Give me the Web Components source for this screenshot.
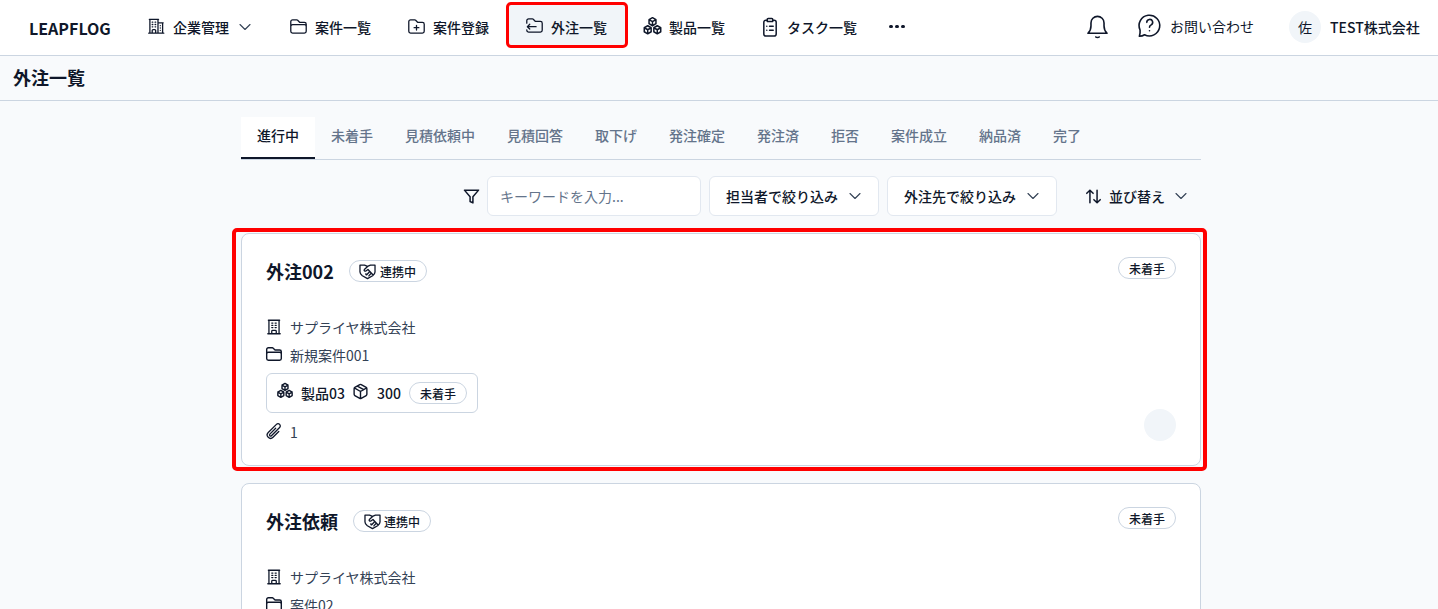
<!DOCTYPE html>
<html lang="ja"><head><meta charset="utf-8"><title>外注一覧</title>
<style>
html,body{margin:0;padding:0;height:609px;overflow:hidden;background:#f8fafc;color:#0f172a;font-family:"Noto Sans CJK JP","Noto Sans",sans-serif;font-size:14px}
</style></head><body>
<app-header></app-header>
<page-title>外注一覧</page-title>
<main-area>
  <status-tabs></status-tabs>
  <filter-bar></filter-bar>
  <order-card highlight title-text="外注002" project="新規案件001" product="製品03" qty="300" files="1"></order-card>
  <order-card title-text="外注依頼" project="案件02" product="製品03" qty="300" files="1"></order-card>
</main-area>
<script>
const P={
 buildingWide:'M2.25 21h19.5m-18-18v18m10.5-18v18m6-13.5V21M6.75 6.75h.75m-.75 3h.75m-.75 3h.75m3-6h.75m-.75 3h.75m-.75 3h.75M6.75 21v-3.375c0-.621.504-1.125 1.125-1.125h2.25c.621 0 1.125.504 1.125 1.125V21M3 3h12m-.75 4.5H21m-3.75 3.75h.008v.008h-.008v-.008Zm0 3h.008v.008h-.008v-.008Zm0 3h.008v.008h-.008v-.008Z',
 building:'M3.75 21h16.5M4.5 3h15M5.25 3v18m13.5-18v18M9 6.75h1.5m-1.5 3h1.5m-1.5 3h1.5m3-6H15m-1.5 3H15m-1.5 3H15M9 21v-3.375c0-.621.504-1.125 1.125-1.125h3.75c.621 0 1.125.504 1.125 1.125V21',
 folder:'M2.25 12.75V12A2.25 2.25 0 0 1 4.5 9.75h15A2.25 2.25 0 0 1 21.75 12v.75m-8.69-6.44-2.12-2.12a1.5 1.5 0 0 0-1.061-.44H4.5A2.25 2.25 0 0 0 2.25 6v12a2.25 2.25 0 0 0 2.25 2.25h15A2.25 2.25 0 0 0 21.75 18V9a2.25 2.25 0 0 0-2.25-2.25h-5.379a1.5 1.5 0 0 1-1.06-.44Z',
 folderPlus:'M12 10.5v6m3-3H9m4.06-7.19-2.12-2.12a1.5 1.5 0 0 0-1.061-.44H4.5A2.25 2.25 0 0 0 2.25 6v12a2.25 2.25 0 0 0 2.25 2.25h15A2.25 2.25 0 0 0 21.75 18V9a2.25 2.25 0 0 0-2.25-2.25h-5.379a1.5 1.5 0 0 1-1.06-.44Z',
 folderIn:'M2.25 9V6A2.25 2.25 0 0 1 4.5 3.75h4.88a1.5 1.5 0 0 1 1.06.44l2.12 2.12a1.5 1.5 0 0 0 1.06.44h5.88A2.25 2.25 0 0 1 21.75 9v9a2.25 2.25 0 0 1-2.25 2.25h-15A2.25 2.25 0 0 1 2.25 18v-.5M14 13.5H3M6 10.5l-3 3 3 3',
 boxes:'M12 2.8l3.6 2.1v4.2L12 11.2 8.4 9.1V4.9zM8.4 4.9 12 7l3.6-2.1M12 7v4.2M7 11.2l3.6 2.1v4.2L7 19.6l-3.6-2.1v-4.2zM3.4 13.3 7 15.4l3.6-2.1M7 15.4v4.2M17 11.2l3.6 2.1v4.2L17 19.6l-3.6-2.1v-4.2zM13.4 13.3l3.6 2.1 3.6-2.1M17 15.4v4.2',
 clipboard:'M9 4.5H7.5A2.25 2.25 0 0 0 5.25 6.75v12.75a2.25 2.25 0 0 0 2.25 2.25h9a2.25 2.25 0 0 0 2.25-2.25V6.75A2.25 2.25 0 0 0 16.5 4.5H15M9 3.75C9 3.2 9.4 2.75 10 2.75h4c.6 0 1 .45 1 1V6H9zM11.5 11.25h4M11.5 15.5h4M8.5 11.25h.01M8.5 15.5h.01',
 chev:'m19.5 8.25-7.5 7.5-7.5-7.5',
 bell:'M3.5 18h17c-1.7-1.6-2.7-3.4-2.7-6.5V8.8a5.8 5.8 0 0 0-11.6 0v2.7c0 3.1-1 4.9-2.7 6.5ZM10.5 21.3c.7.7 2.3.7 3 0',
 help:'M3 21.5c1.8 0 3.3-.4 4.6-1.3A9.2 9.2 0 1 0 3.6 16c.2 1.9 0 3.8-.6 5.5ZM9.6 9.2a2.6 2.6 0 1 1 3.9 2.2c-.9.5-1.5 1.1-1.5 2.1M12 16.6h.01',
 funnel:'M22 3H2l8 9.46V19l4 2v-8.54L22 3Z',
 sort:'M7.5 20V4M3.5 8l4-4 4 4M16.5 4v16M12.5 16l4 4 4-4',
 shake:'M2.5 4h5.8L12 5.4 15.7 4h5.8v8.5c0 2.2-1.3 3.4-3 4.8L12 21l-6.5-3.7c-1.7-1.4-3-2.6-3-4.8ZM12.5 5.4 8 9.6c-.9 1 .5 2.6 2 1.7l2.6-1.9 5.9 6.4M14.3 12.6l-3 3.2c-.7.8-1.7 0-1.3-.9M16.4 14.6l-2.7 3',
 cube:'M21 8a2 2 0 0 0-1-1.73l-7-4a2 2 0 0 0-2 0l-7 4A2 2 0 0 0 3 8v8a2 2 0 0 0 1 1.73l7 4a2 2 0 0 0 2 0l7-4A2 2 0 0 0 21 16ZM12 22V12M3.3 7 12 12l8.7-5M7.5 4.27l9 5.15',
 clip:'m18.375 12.739-7.693 7.693a4.5 4.5 0 0 1-6.364-6.364l10.94-10.94A3 3 0 1 1 19.5 7.372L8.552 18.32m.009-.01-.01.01m5.699-9.941-7.81 7.81a1.5 1.5 0 0 0 2.112 2.13'
};
class XIcon extends HTMLElement{
 connectedCallback(){
  const s=+(this.getAttribute('size')||16),d=+(this.getAttribute('draw')||s),w=+(this.getAttribute('w')||1.3),u=+(this.getAttribute('up')||0);
  const m=(s-d)/2;
  this.attachShadow({mode:'open'}).innerHTML=`<style>:host{display:inline-flex;flex:none;width:${s}px;height:${s}px}svg{display:block;flex:none;margin:${m-u}px 0 0 ${m}px;overflow:visible}</style><svg width="${d}" height="${d}" viewBox="0 0 24 24" fill="none" stroke="currentColor" stroke-width="${w*24/d}" stroke-linecap="round" stroke-linejoin="round"><path d="${P[this.getAttribute('n')]}"/></svg>`;
 }
}
customElements.define('x-icon',XIcon);

class NavItem extends HTMLElement{
 constructor(){super();this.attachShadow({mode:'open'}).innerHTML=`<style>
 :host{display:flex;align-items:center;gap:9px;height:40px;padding:0 16px 2px;border-radius:6px;box-sizing:border-box;position:relative;isolation:isolate;color:#0f172a;font-weight:500;white-space:nowrap}
 .mark{display:none;position:absolute;z-index:-1;left:-4px;right:-5px;top:-6px;bottom:0;border:3.5px solid #f00;border-radius:5px;box-sizing:border-box;background:#f1f5f9}
 :host([active]) .mark{display:block}
 </style><slot></slot><div class="mark"></div>`}
}
customElements.define('nav-item',NavItem);

class AppHeader extends HTMLElement{
 constructor(){super();this.attachShadow({mode:'open'}).innerHTML=`<style>
 :host{display:flex;align-items:center;height:56px;box-sizing:border-box;border-bottom:1px solid #cbd5e1;background:#fff;padding:0 19px 0 29px;font-size:14px}
 .logo{font-weight:600;font-size:16px;width:103px;flex:none;white-space:nowrap}
 nav{display:flex;align-items:center;gap:5px}
 .chev{margin-left:-1px;color:#334155}
 .more{width:16px;margin-left:11px;display:flex;gap:2.5px;justify-content:center;position:relative;top:-1px}
 .more i{width:3.5px;height:3.5px;border-radius:50%;background:#0f172a;display:block;flex:none}
 .right{margin-left:auto;display:flex;align-items:center}
 .q{display:flex;align-items:center;margin-left:28px;gap:9px;white-space:nowrap}
 .q span{position:relative;top:-2px}
 .av{width:32px;height:32px;border-radius:50%;background:#f1f5f9;display:flex;align-items:center;justify-content:center;margin-left:35px;margin-right:9px;position:relative;top:-1px}
 .co{white-space:nowrap;font-weight:500;width:89px;position:relative;top:-1px}
 </style>
 <div class="logo">LEAPFLOG</div>
 <nav>
 <nav-item><x-icon n="buildingWide" draw="18.5"></x-icon>企業管理<x-icon class="chev" n="chev" w="1.1"></x-icon></nav-item>
 <nav-item><x-icon n="folder" draw="19"></x-icon>案件一覧</nav-item>
 <nav-item><x-icon n="folderPlus" draw="19"></x-icon>案件登録</nav-item>
 <nav-item active><x-icon n="folderIn" draw="19" up="1"></x-icon>外注一覧</nav-item>
 <nav-item><x-icon n="boxes" draw="23" w="1.5"></x-icon>製品一覧</nav-item>
 <nav-item><x-icon n="clipboard" draw="22" w="1.5"></x-icon>タスク一覧</nav-item>
 <div class="more"><i></i><i></i><i></i></div>
 </nav>
 <div class="right">
 <x-icon n="bell" size="24" draw="27" w="1.6" up="1"></x-icon>
 <div class="q"><x-icon n="help" size="24" draw="27" w="1.6" up="2"></x-icon><span>お問い合わせ</span></div>
 <div class="av">佐</div><div class="co">TEST株式会社</div>
 </div>`}
}
customElements.define('app-header',AppHeader);

class PageTitle extends HTMLElement{
 constructor(){super();this.attachShadow({mode:'open'}).innerHTML=`<style>:host{display:flex;align-items:center;height:45px;box-sizing:border-box;border-bottom:1px solid #cbd5e1;padding:0 0 2px 13px;font-size:18px;font-weight:600;background:#f8fafc}</style><slot></slot>`}
}
customElements.define('page-title',PageTitle);

class MainArea extends HTMLElement{
 constructor(){super();this.attachShadow({mode:'open'}).innerHTML=`<style>:host{display:block;width:960px;margin:0 auto 0 241px;padding-top:16px}</style><slot></slot>`}
}
customElements.define('main-area',MainArea);

class StatusTabs extends HTMLElement{
 constructor(){super();
 const t=['進行中','未着手','見積依頼中','見積回答','取下げ','発注確定','発注済','拒否','案件成立','納品済','完了'];
 this.attachShadow({mode:'open'}).innerHTML=`<style>
 :host{display:flex;height:43px;box-sizing:border-box;border-bottom:1px solid #cbd5e1}
 div{height:42px;box-sizing:border-box;padding:0 16px 6px;display:flex;align-items:center;color:#64748b;font-weight:500;font-size:14px;white-space:nowrap}
 .on{background:#fff;color:#0f172a;border-bottom:2px solid #0f172a;padding-bottom:4px}
 </style>`+t.map((x,i)=>`<div class="${i?'':'on'}">${x}</div>`).join('')}
}
customElements.define('status-tabs',StatusTabs);

class FilterBar extends HTMLElement{
 constructor(){super();this.attachShadow({mode:'open'}).innerHTML=`<style>
 :host{display:flex;align-items:center;justify-content:flex-end;margin-top:16px;height:40px;gap:8px;font-weight:500}
 .in{width:214px;height:40px;box-sizing:border-box;border:1px solid #e2e8f0;border-radius:6px;background:#fff;padding-left:12px;display:flex;align-items:center;color:#64748b;font-weight:400}
 .b{height:40px;box-sizing:border-box;border:1px solid #e2e8f0;border-radius:6px;background:#fff;padding:0 16px;display:flex;align-items:center;gap:9px;white-space:nowrap;width:170px}
 .s{height:40px;display:flex;align-items:center;gap:8px;padding:0 12px 0 20px;white-space:nowrap}
 .c{color:#334155}
 </style>
 <x-icon n="funnel" draw="17" w="1.5"></x-icon>
 <div class="in">キーワードを入力...</div>
 <div class="b">担当者で絞り込み<x-icon class="c" n="chev" w="1.1"></x-icon></div>
 <div class="b">外注先で絞り込み<x-icon class="c" n="chev" w="1.1"></x-icon></div>
 <div class="s"><x-icon n="sort" draw="19" w="1.5"></x-icon>並び替え<x-icon class="c" n="chev" w="1.1"></x-icon></div>`}
}
customElements.define('filter-bar',FilterBar);

class StatusChip extends HTMLElement{
 constructor(){super();this.attachShadow({mode:'open'}).innerHTML=`<style>
 :host{display:inline-flex;align-items:center;gap:4px;height:22px;box-sizing:border-box;padding:0 10px;border:1px solid #cbd5e1;border-radius:999px;background:#fff;font-size:12px;font-weight:500;color:#0f172a;white-space:nowrap;flex:none}
 </style><slot></slot>`}
}
customElements.define('status-chip',StatusChip);

class OrderCard extends HTMLElement{
 connectedCallback(){
 const a=n=>this.getAttribute(n);
 this.attachShadow({mode:'open'}).innerHTML=`<style>
 :host{display:block;position:relative;height:233px;box-sizing:border-box;margin-top:17px;border:1px solid #cbd5e1;border-radius:8px;background:#fff;padding:22px 24px 24px;color:#334155}
 .mark{display:none;position:absolute;left:-10px;right:-7px;top:-6px;bottom:-6px;border:4px solid #f00;border-radius:5px;box-sizing:border-box}
 :host([highlight]) .mark{display:block}
 .top{display:flex;align-items:center;height:30px;gap:15px;margin-bottom:27px}
 h2{margin:0;font-size:18px;font-weight:600;color:#0f172a;line-height:30px}
 .st{position:absolute;right:24px;top:23px}
 .row{display:flex;align-items:center;gap:8px;height:28px;font-size:14px;color:#334155}
 .row x-icon{color:#0f172a}
 .prod{display:inline-flex;align-items:center;height:40px;box-sizing:border-box;border:1px solid #cbd5e1;border-radius:6px;padding:0 10px;gap:8px;color:#0f172a;font-weight:500;margin:4px 0 5px}
 .circle{position:absolute;right:24px;bottom:24px;width:32px;height:32px;border-radius:50%;background:#f1f5f9}
 .chip-i{color:#0f172a}
 </style>
 <div class="top"><h2>${a('title-text')}</h2><status-chip><x-icon class="chip-i" n="shake" draw="19" w="1.3"></x-icon>連携中</status-chip></div>
 <status-chip class="st">未着手</status-chip>
 <div class="row"><x-icon n="building" draw="18"></x-icon>サプライヤ株式会社</div>
 <div class="row"><x-icon n="folder" draw="18" w="1.4" up="1"></x-icon>${a('project')}</div>
 <div class="prod"><x-icon n="boxes" draw="20" w="1.4" up="2"></x-icon>${a('product')}<x-icon n="cube" draw="17" w="1.4" up="2"></x-icon>${a('qty')}<status-chip>未着手</status-chip></div>
 <div class="row" style="height:28px"><x-icon n="clip" draw="18" w="1.3" up="1"></x-icon>${a('files')}</div>
 <div class="circle"></div>
 <div class="mark"></div>`;
 }
}
customElements.define('order-card',OrderCard);
</script>
</body></html>
